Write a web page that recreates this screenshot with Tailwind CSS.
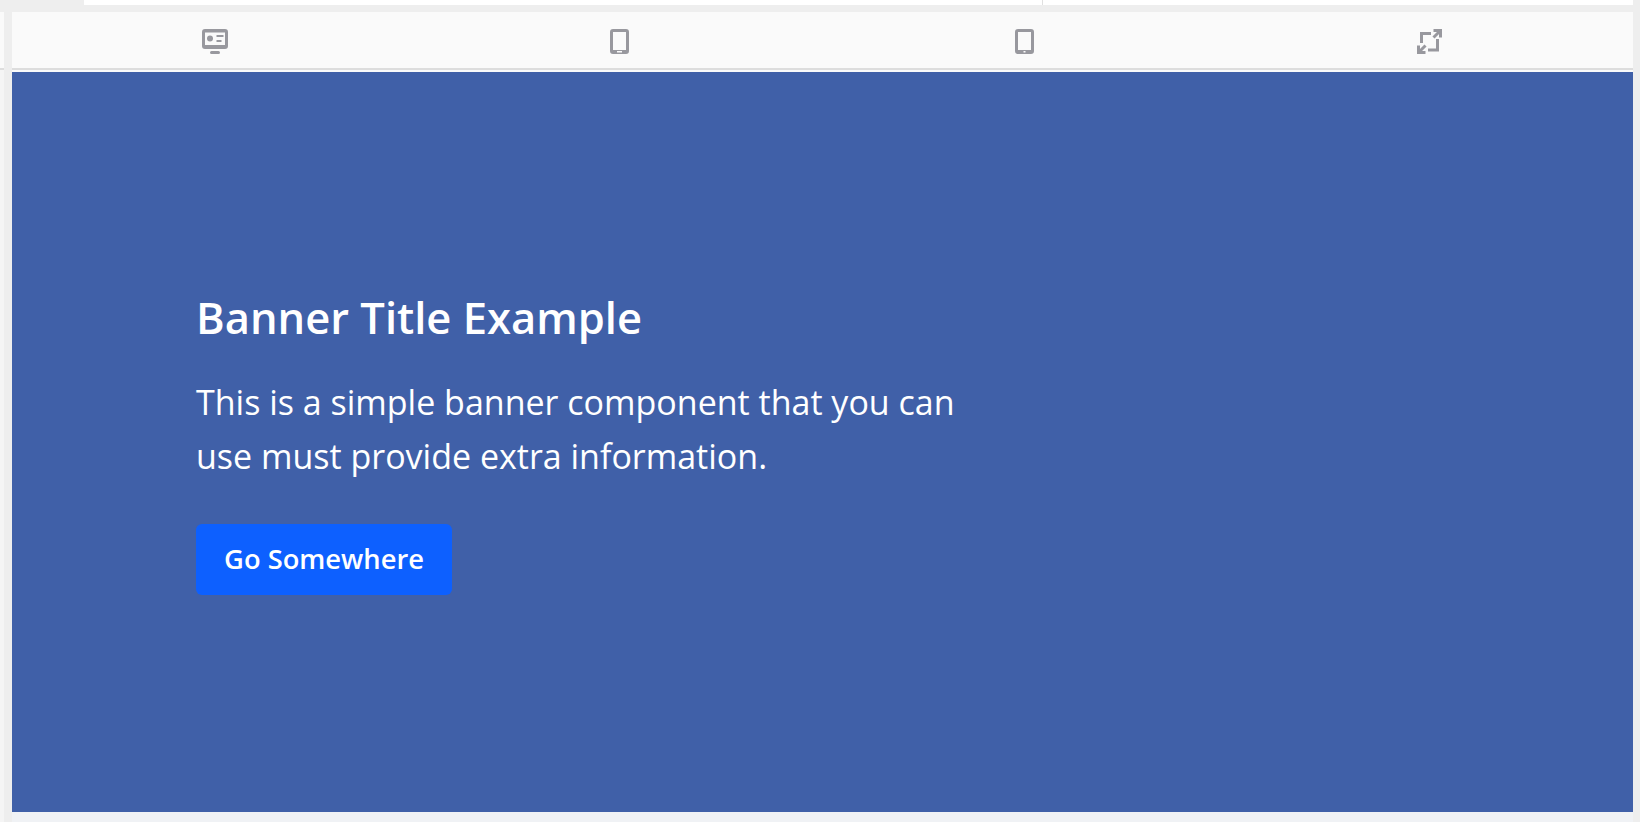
<!DOCTYPE html>
<html lang="en">
<head>
    <meta charset="UTF-8">
    <meta name="viewport" content="width=device-width, initial-scale=1.0">
    <title>Banner Preview</title>
    <script src="https://cdn.jsdelivr.net/npm/@tailwindcss/browser@4"></script>
</head>
<body class="h-screen overflow-hidden bg-[#eeeeee] font-['Open_Sans',sans-serif]">
    <!--Top strip of the page behind the preview-->
    <div class="flex h-[5px] pr-[7px]">
        <div class="w-[84px]"></div>
        <div class="w-[958px] bg-white"></div>
        <div class="w-px bg-[#e0e0e0]"></div>
        <div class="flex-1 bg-white"></div>
    </div>

    <div class="flex h-[817px]">
        <div class="w-[4px] mt-[7px] bg-[#f5f5f5]">
            <div class="h-[56px] bg-[#fafafa]"></div>
            <div class="h-[2px] bg-[#dddddd]"></div>
        </div>
        <div class="w-[8px]"></div>

        <div class="w-[1621px]">
            <div class="h-[7px]"></div>

            <!--Device toolbar-->
            <div class="grid grid-cols-4 h-[56px] bg-[#fafafa] text-[#98989e]">
                <div class="flex justify-center pt-[17px]">
                    <svg class="h-[25px] w-[26px]" viewBox="0 0 26 25" fill="currentColor">
                        <path fill-rule="evenodd" d="M3 0h20a3 3 0 0 1 3 3v14a3 3 0 0 1-3 3H3a3 3 0 0 1-3-3V3a3 3 0 0 1 3-3zM3 3.500V16h20V3.500z"/>
                        <circle cx="8" cy="9.500" r="3"/>
                        <rect x="14.500" y="6" width="7" height="2"/>
                        <rect x="14.500" y="11" width="5" height="2"/>
                        <rect x="8" y="22" width="10" height="3" rx="1.500"/>
                    </svg>
                </div>
                <div class="flex justify-center pt-[17px]">
                    <svg class="h-[25px] w-[19px]" viewBox="0 0 19 25" fill="currentColor">
                        <path fill-rule="evenodd" d="M3 0h13a3 3 0 0 1 3 3v19a3 3 0 0 1-3 3H3a3 3 0 0 1-3-3V3a3 3 0 0 1 3-3zM3 3v18h13V3zM7 22v1.500h5V22z"/>
                    </svg>
                </div>
                <div class="flex justify-center pt-[17px] pr-[1px]">
                    <svg class="h-[25px] w-[19px]" viewBox="0 0 19 25" fill="currentColor">
                        <path fill-rule="evenodd" d="M3 0h13a3 3 0 0 1 3 3v19a3 3 0 0 1-3 3H3a3 3 0 0 1-3-3V3a3 3 0 0 1 3-3zM3 3v18h13V3zM8.500 22v1.500h2V22z"/>
                    </svg>
                </div>
                <div class="flex justify-center pt-[17px] pr-[1px]">
                    <svg class="h-[25px] w-[25px]" viewBox="0 0 25 25" fill="none" stroke="currentColor" stroke-width="3">
                        <path d="M14 4.500H4.500V14M11 21h9.500V10"/>
                        <path d="M16.500 1.500h7V8.500M23 2l-6.500 6.500M1.500 16.500v7H8.500M2 23l6.500-6.500"/>
                    </svg>
                </div>
            </div>
            <div class="h-[2px] bg-[#dddddd]"></div>
            <div class="h-[2px] bg-[#fafafa]"></div>

            <!--Banner-->
            <div class="h-[740px] bg-[#4060a8] pl-[184px] pt-[218px] text-white">
                <h1 class="text-[43.500px] leading-[56px] font-semibold">Banner Title Example</h1>
                <p class="mt-[30px] w-[800px] text-[34px] leading-[53.500px]">This is a simple banner component that you can use must provide extra information.</p>
                <a href="#" class="mt-[41px] flex items-center justify-center w-[256px] h-[71px] rounded-md bg-[#0d60ff] text-[27.300px] font-semibold">Go Somewhere</a>
            </div>
            <div class="h-[10px] bg-[#f0f2f5]"></div>
        </div>
    </div>
</body>
</html>
